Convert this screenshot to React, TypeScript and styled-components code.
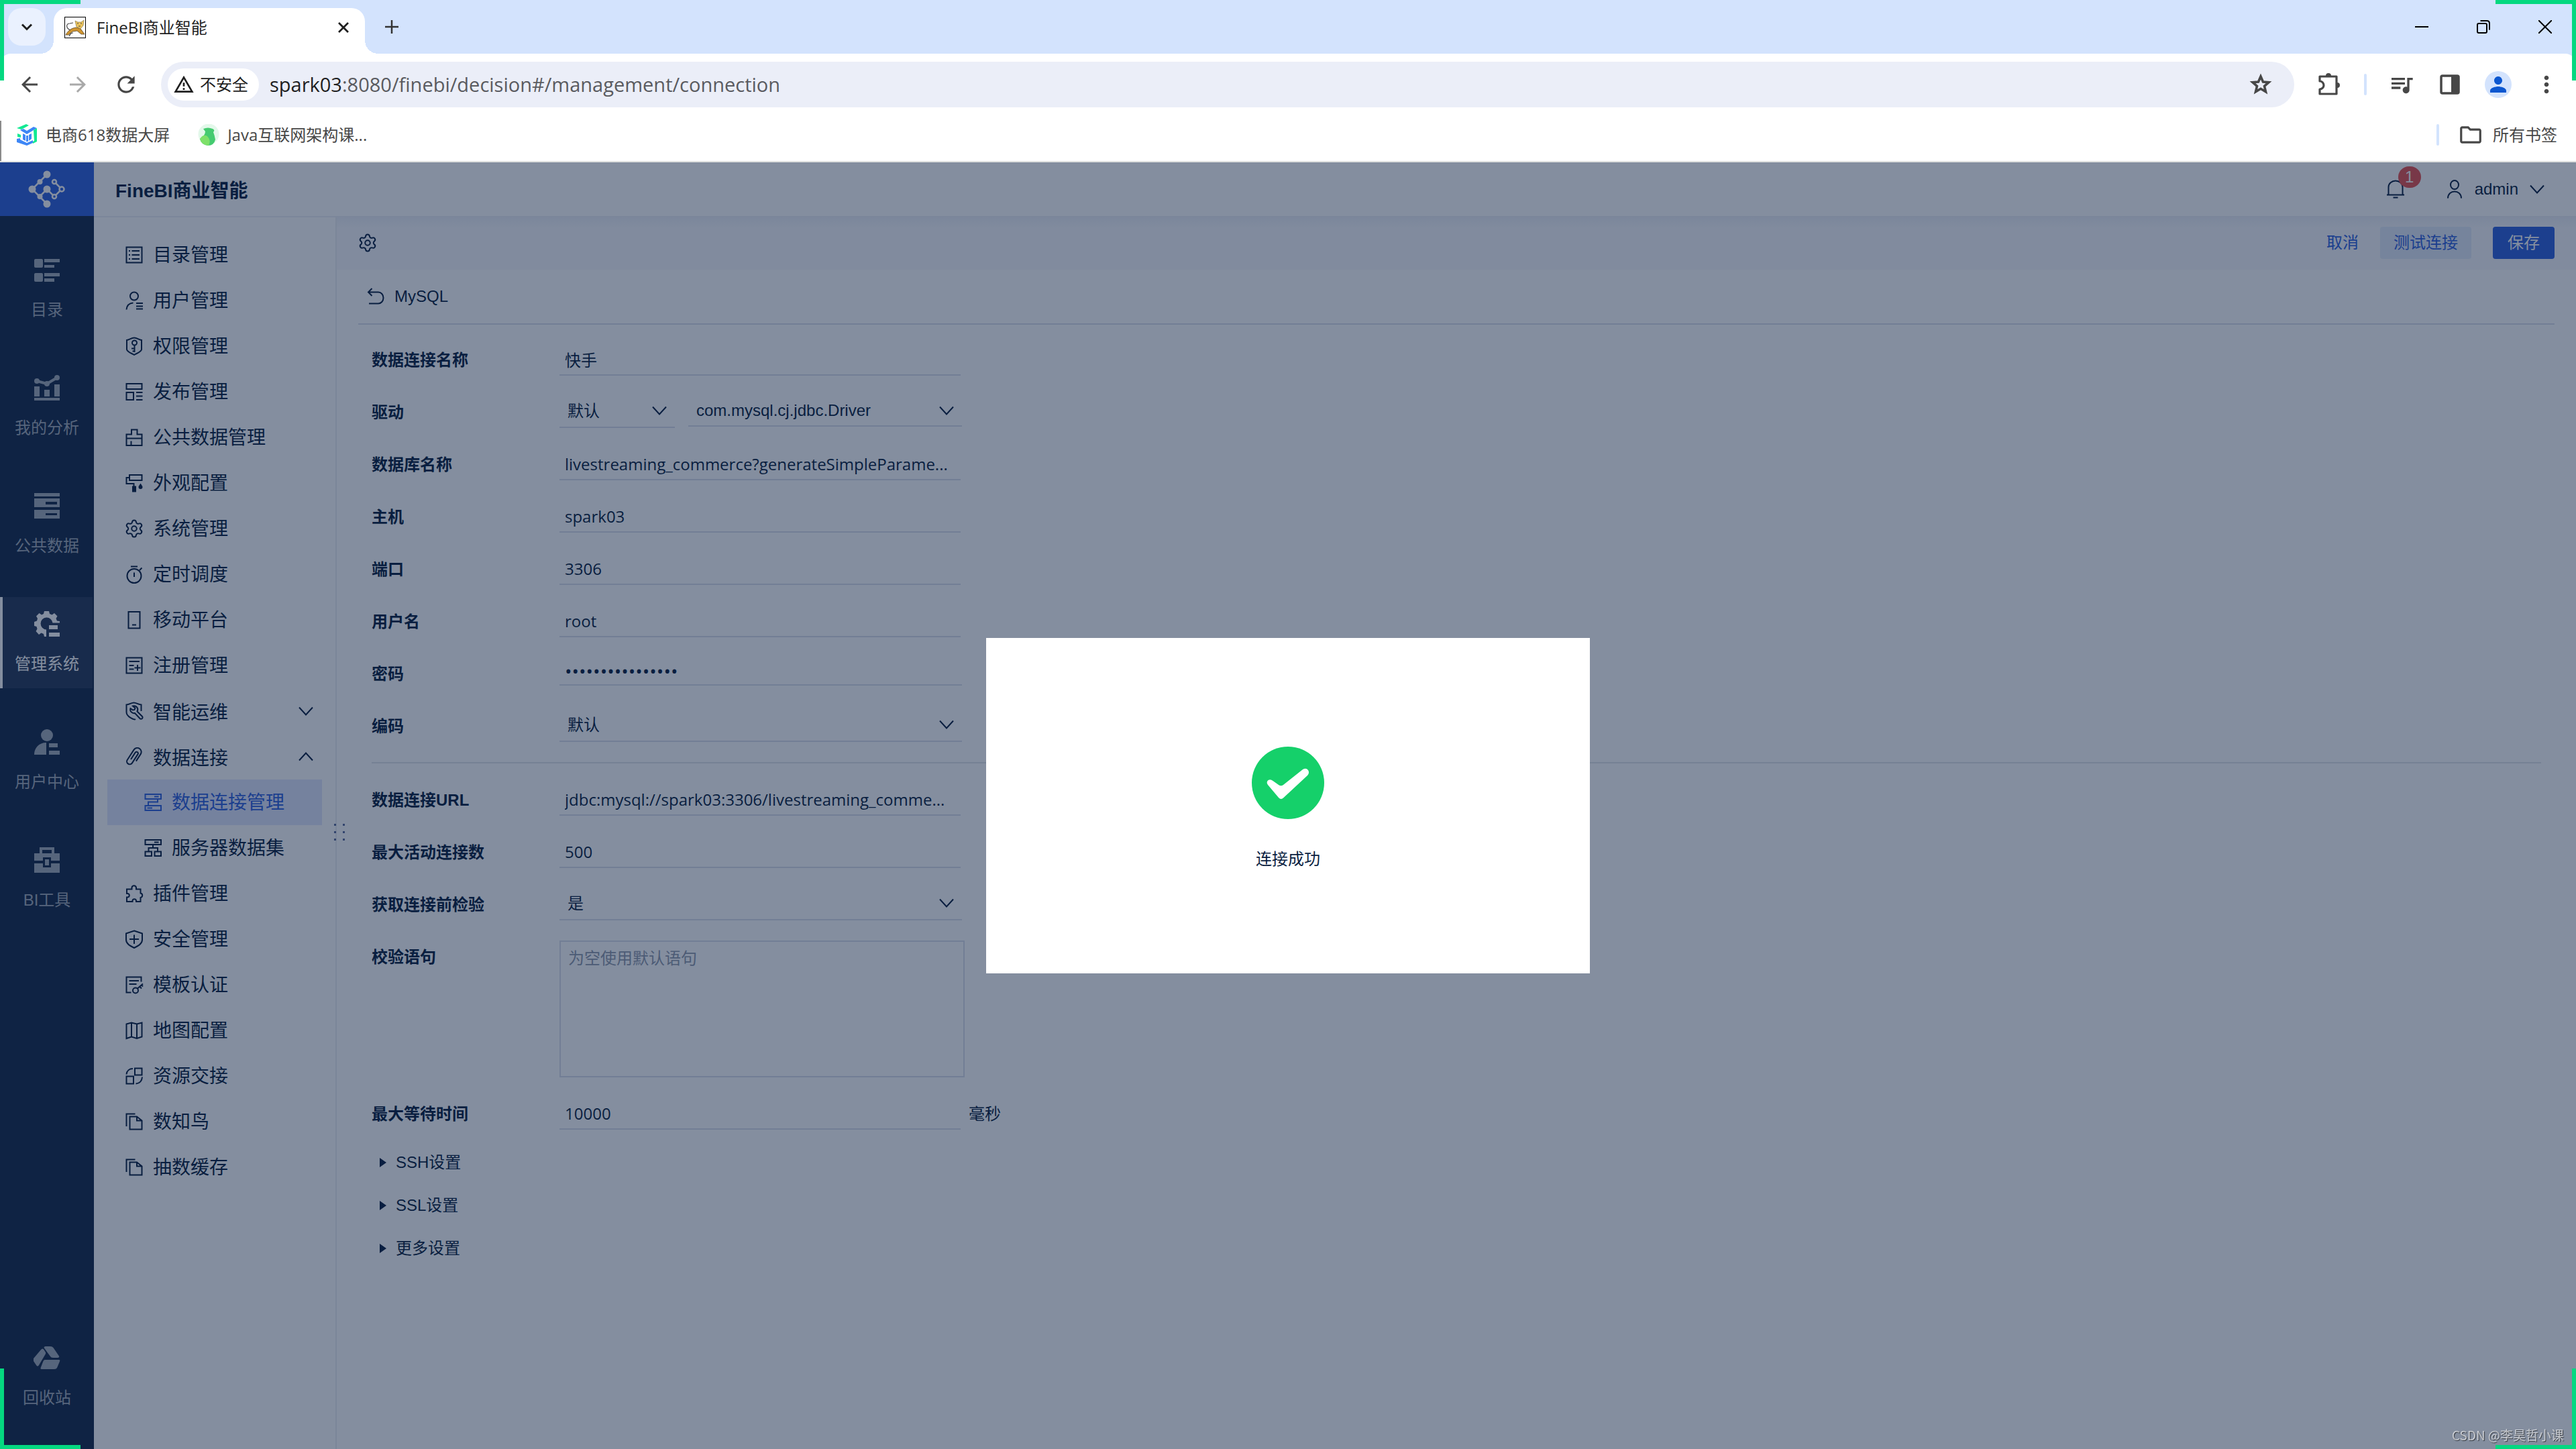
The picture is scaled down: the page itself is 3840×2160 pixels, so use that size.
import React, { ReactNode } from "react";
import styled, { createGlobalStyle, css } from "styled-components";
import { Settings } from "lucide-react";
import { MdQueueMusic, MdOutlineFolder, MdPerson, MdOutlineWarningAmber, MdRefresh, MdArrowBack, MdArrowForward, MdMoreVert } from "react-icons/md";

const chromeFont = `"Open Sans", "Noto Sans CJK SC", sans-serif`;
const appFont = `"Liberation Sans", "Noto Sans CJK SC", sans-serif`;

const ink = "#091e40";
const blue = "#2f60dc";
const rule = "#dbdeea";

const GlobalStyle = createGlobalStyle`
  *, *::before, *::after { box-sizing: border-box; }
  body { margin: 0; font-family: ${appFont}; font-size: 24px; line-height: 32px; color: ${ink}; background: #fff; }
  button, input, select, textarea { font: inherit; color: inherit; margin: 0; border: 0; border-radius: 0; background: none; padding: 0; outline: none; }
  a { color: inherit; text-decoration: none; }
  svg { display: block; flex: none; }
`;

const Page = styled.div`
  min-height: 100vh;
  display: flex;
  flex-direction: column;
`;

/* ---------- browser frame ---------- */

const Browser = styled.header`
  background: #d3e3fd;
  font-family: ${chromeFont};
  color: #1f1f1f;
`;

const TabStrip = styled.div`
  height: 80px;
  padding: 12px 36px 0 12px;
  display: flex;
  align-items: flex-start;
`;

const TabSearch = styled.button`
  width: 56px;
  height: 56px;
  border-radius: 20px;
  background: #eaf1fe;
  display: grid;
  place-items: center;
`;

const Tab = styled.div`
  position: relative;
  margin-left: 12px;
  width: 464px;
  height: 68px;
  padding: 0 22px 10px 16px;
  border-radius: 20px 20px 0 0;
  background: #fff;
  display: flex;
  align-items: center;
  gap: 16px;

  &::before,
  &::after {
    content: "";
    position: absolute;
    bottom: 0;
    width: 20px;
    height: 20px;
  }
  &::before {
    right: 100%;
    background: radial-gradient(circle at 0 0, transparent 20px, #fff 20px);
  }
  &::after {
    left: 100%;
    background: radial-gradient(circle at 100% 0, transparent 20px, #fff 20px);
  }
`;

const TabTitle = styled.span`
  flex: 1;
`;

const PlainButton = styled.button`
  display: grid;
  place-items: center;
`;

const NewTab = styled(PlainButton)`
  margin-left: 20px;
  width: 40px;
  height: 56px;
`;

const WindowButtons = styled.div`
  margin-left: auto;
  height: 56px;
  display: flex;
  align-items: center;
  gap: 72px;
`;

const Toolbar = styled.div`
  height: 100px;
  padding: 12px 24px 20px 24px;
  border-radius: 16px 16px 0 0;
  background: #fff;
  color: #474747;
  display: flex;
  align-items: center;
`;

const NavButtons = styled.div`
  display: flex;
  gap: 32px;
  margin-right: 32px;
`;

const NavButton = styled(PlainButton)<{ $dim?: boolean }>`
  width: 40px;
  height: 40px;
  color: ${(p) => (p.$dim ? "#a9a9a9" : "#474747")};
`;

const Omnibox = styled.div`
  flex: 1;
  height: 68px;
  padding: 0 32px 0 10px;
  border-radius: 34px;
  background: #ebeef8;
  display: flex;
  align-items: center;
  gap: 16px;
`;

const SiteChip = styled.button`
  height: 48px;
  padding: 0 16px 0 8px;
  border-radius: 24px;
  background: #fff;
  color: #1f1f1f;
  display: flex;
  align-items: center;
  gap: 8px;
`;

const Address = styled.span`
  flex: 1;
  font-size: 29px;
  line-height: 40px;
  color: #5a5b60;

  b {
    font-weight: 400;
    color: #1f1f1f;
  }
`;

const ToolIcons = styled.div`
  margin-left: 32px;
  display: flex;
  align-items: center;
  gap: 32px;
`;

const Separator = styled.span`
  width: 4px;
  height: 32px;
  border-radius: 2px;
  background: #d3e3fd;
`;

const Avatar = styled.button`
  width: 40px;
  height: 40px;
  border-radius: 50%;
  background: #d3e3fd;
  color: #0b57d0;
  display: grid;
  place-items: center;
`;

const Bookmarks = styled.nav`
  height: 62px;
  padding: 0 28px 18px 24px;
  background: #fff;
  color: #474747;
  border-bottom: 2px solid #dfe1df;
  box-shadow: inset 2px 0 #8a8a8a;
  display: flex;
  align-items: center;
  gap: 42px;
`;

const Bookmark = styled.a`
  display: flex;
  align-items: center;
  gap: 12px;
`;

const AllBookmarks = styled.button`
  margin-left: auto;
  display: flex;
  align-items: center;
  gap: 14px;

  ${Separator} {
    margin-right: 14px;
  }
`;

/* ---------- application shell ---------- */

const Shell = styled.div`
  position: relative;
  flex: 1;
  display: flex;
`;

const Rail = styled.nav`
  width: 140px;
  background: #152848;
  display: flex;
  flex-direction: column;
  gap: 40px;
  padding-bottom: 40px;
`;

const Logo = styled.a`
  height: 80px;
  background: ${blue};
  color: #fff;
  display: grid;
  place-items: center;
`;

const RailItem = styled.a<{ $active?: boolean; $last?: boolean }>`
  height: 136px;
  margin-right: 2px;
  padding: 20px 0 0 2px;
  color: ${(p) => (p.$active ? "#fff" : "#a3acb8")};
  background: ${(p) => (p.$active ? "#273858" : "transparent")};
  box-shadow: ${(p) => (p.$active ? "inset 4px 0 #fff" : "none")};
  margin-top: ${(p) => (p.$last ? "auto" : "0")};
  display: flex;
  flex-direction: column;
  align-items: center;
  gap: 24px;
`;

const Body = styled.div`
  flex: 1;
  min-width: 0;
  display: flex;
  flex-direction: column;
`;

const AppHeader = styled.div`
  height: 80px;
  padding: 0 46px 0 32px;
  background: #fff;
  display: flex;
  align-items: center;
  justify-content: space-between;
`;

const AppTitle = styled.h1`
  margin: 0;
  padding-top: 6px;
  font-size: 28px;
  line-height: 40px;
`;

const HeaderTools = styled.div`
  display: flex;
  align-items: center;
  gap: 60px;
`;

const Notice = styled.button`
  position: relative;
`;

const Badge = styled.span`
  position: absolute;
  left: 18px;
  bottom: 16px;
  width: 34px;
  height: 32px;
  border-radius: 16px;
  background: #e75250;
  color: #fff;
  text-align: center;
`;

const Account = styled.button`
  display: flex;
  align-items: center;
  gap: 16px;
`;

const Split = styled.div`
  flex: 1;
  display: flex;
  border-top: 2px solid #eceef4;
`;

const Sidebar = styled.nav`
  position: relative;
  width: 362px;
  padding: 22px 20px;
  background: #fff;
  border-right: 2px solid #eceef2;
  font-size: 28px;
  line-height: 40px;
`;

const SideItem = styled.a<{ $sub?: boolean; $active?: boolean }>`
  height: 68px;
  padding: 0 12px 0 ${(p) => (p.$sub ? 54 : 26)}px;
  display: flex;
  align-items: center;
  gap: 14px;
  ${(p) =>
    p.$active &&
    css`
      background: #e1e6fd;
      color: ${blue};
    `}
`;

const SideLabel = styled.span<{ $group?: boolean }>`
  flex: 1;
  padding-top: ${(p) => (p.$group ? 6 : 2)}px;
`;

const DragHandle = styled.span`
  position: absolute;
  right: -14px;
  top: 904px;
  display: grid;
  grid-template-columns: 3px 3px;
  gap: 8px 10px;

  i {
    height: 3px;
    background: #5a6b9a;
  }
`;

const Main = styled.main`
  flex: 1;
  min-width: 0;
  background: #fff;
`;

const ActionBar = styled.div`
  height: 78px;
  padding: 0 32px 2px;
  background: linear-gradient(#edf0f7, #f8f9fc 16px);
  display: flex;
  align-items: center;
  gap: 32px;
`;

const ActionButton = styled.button<{ $kind: "text" | "soft" | "solid" }>`
  height: 48px;
  border-radius: 4px;
  color: ${(p) => (p.$kind === "solid" ? "#fff" : blue)};
  background: ${(p) => ({ text: "none", soft: "#e3eaf8", solid: blue }[p.$kind])};
  padding: 0 ${(p) => ({ text: 0, soft: 20, solid: 22 }[p.$kind])}px;
`;

const Spacer = styled.span`
  flex: 1;
`;

const BackRow = styled.div`
  height: 82px;
  margin: 0 32px;
  padding-left: 12px;
  border-bottom: 2px solid ${rule};
`;

const BackButton = styled.button`
  height: 80px;
  display: flex;
  align-items: center;
  gap: 14px;
`;

const Form = styled.form`
  padding: 28px 52px;
  display: flex;
  flex-direction: column;
  gap: 30px;
`;

const FormRow = styled.div`
  min-height: 48px;
  display: flex;
  align-items: flex-start;
`;

const FieldLabel = styled.label`
  width: 280px;
  font-weight: 700;
  line-height: 50px;
  height: 48px;
`;

const TextInput = styled.input`
  width: 598px;
  height: 48px;
  padding: 0 8px;
  border-bottom: 2px solid ${rule};
  font-family: ${chromeFont};
`;

const PasswordInput = styled(TextInput)`
  width: 600px;
  height: 42px;
  font-size: 28px;
`;

const SelectBox = styled.div<{ $w: number; $h?: number }>`
  position: relative;
  width: ${(p) => p.$w}px;
  height: ${(p) => p.$h ?? 48}px;
  margin-right: 20px;

  select {
    appearance: none;
    width: 100%;
    height: 100%;
    padding: 0 40px 0 12px;
    border-bottom: 2px solid ${rule};
  }
  svg {
    position: absolute;
    right: 11px;
    top: 10px;
    pointer-events: none;
  }
`;

const TextArea = styled.textarea`
  width: 604px;
  height: 204px;
  padding: 9px 11px;
  border: 2px solid ${rule};
  resize: none;

  &::placeholder {
    color: #8f99ab;
    opacity: 1;
  }
`;

const Unit = styled.span`
  margin-left: 12px;
  line-height: 50px;
`;

const Divider = styled.hr`
  width: 100%;
  height: 2px;
  margin: 0;
  border: 0;
  background: #e0e4e8;
`;

const Expander = styled.button`
  align-self: flex-start;
  height: 34px;
  padding-left: 12px;
  display: flex;
  align-items: center;
  gap: 13px;
`;

/* ---------- overlay layers ---------- */

const Mask = styled.div`
  position: absolute;
  inset: 0;
  background: rgba(9, 30, 64, 0.5);
  display: grid;
  place-items: center;
`;

const Dialog = styled.div`
  width: 900px;
  height: 500px;
  padding-top: 162px;
  background: #fff;
  display: flex;
  flex-direction: column;
  align-items: center;
  gap: 44px;
`;

const Corner = styled.span<{ $v: "top" | "bottom"; $h: "left" | "right" }>`
  position: fixed;
  ${(p) => p.$v}: 0;
  ${(p) => p.$h}: 0;
  width: 120px;
  height: 120px;
  border: 0 solid #05d880;
  border-${(p) => p.$v}-width: 6px;
  border-${(p) => p.$h}-width: 6px;
  pointer-events: none;
`;

const Watermark = styled.span`
  position: fixed;
  right: 18px;
  bottom: 9px;
  font: 19px/24px "Noto Sans CJK SC", sans-serif;
  color: rgba(255, 255, 255, 0.65);
  text-shadow: 1px 1px 1px rgba(0, 0, 0, 0.6);
`;

/* ---------- icons ---------- */

const Line = ({ children, size = 28, w = 2 }: { children: ReactNode; size?: number; w?: number }) => (
  <svg width={size} height={size} viewBox="0 0 28 28" fill="none" stroke="currentColor" strokeWidth={w} aria-hidden="true">
    {children}
  </svg>
);

const Chevron = ({ up }: { up?: boolean }) => (
  <svg width="24" height="24" viewBox="0 0 24 24" fill="none" stroke="currentColor" strokeWidth="2" aria-hidden="true">
    <path d={up ? "M2 17.5 12 6.5 22 17.5" : "M2 6.5 12 17.5 22 6.5"} />
  </svg>
);

const Files = () => (
  <Line>
    <path d="M2.5 21V2.5H15.5M7.5 6.5H18L25.5 12.5V25.5H7.5ZM18 6.5V12.5H25.5" />
  </Line>
);

const GearIcon = styled(Settings)`
  margin: -1px;
`;

const Gear = () => <GearIcon size={30} strokeWidth={1.6} />;

const sideIcons: Record<string, ReactNode> = {
  catalog: <Line><path d="M2.5 2.5H25.5V25.5H2.5ZM10.5 8H22M10.5 14H22M10.5 20H22M6 8H8M6 14H8M6 20H8" /></Line>,
  user: <Line><circle cx="14" cy="7.5" r="6" /><path d="M2.5 27.5C3 22 6.5 18 12.5 17.5M17 18H27M17 22.5H27M17 26.5H27" /></Line>,
  perm: <Line><path d="M3 5C7 4.500 9.500 1.500 14 1.500S21 4.500 25 5V19C24 23 18 24.500 14 27C10 24.500 4 23 3 19Z" /><circle cx="14.500" cy="9" r="3.500" /><path d="M14.500 12.500V23M10 17.500H14.500M11.500 21.500H14.500" /></Line>,
  publish: <Line><path d="M2.500 2H25.500V10H2.500ZM2.500 15H13V26H2.500ZM17 15H26.500M17 20.500H26.500M17 26H26.500" /></Line>,
  data: <Line><path d="M2.500 26V9.500H10V2.500H18.500V9.500H25.500V26ZM2.500 15.500H25.500M9.500 19.500V26" /></Line>,
  look: <Line><path d="M7 2H25.500V10H7ZM7 6H2.500V15H13.500V19" /><path d="M11 18.500H17V27.500H11ZM23.500 14.500C25 17 26.500 18.500 26.500 20A3 3 0 0 1 20.500 20C20.500 18.500 22 17 23.500 14.500Z" fill="currentColor" stroke="none" /></Line>,
  system: <Gear />,
  timer: <Line><circle cx="14" cy="16.500" r="10.500" /><path d="M9 2.500H19M14 11.500V18M22 8L25.500 4.500" /></Line>,
  mobile: <Line><path d="M5.500 2H22.500V26.500H5.500ZM11 21.500H17" /></Line>,
  register: <Line><path d="M2.500 2.500H25.500V25.500H2.500ZM6.500 8H22M6.500 14H13.500M6.500 19.500H13.500M14.500 17.500H23.500M19 13V22" /></Line>,
  ops: (
    <Line>
      <path d="M16 26C14 27.500 2.500 22.500 2.500 15.500V4.500C7 4.500 9.500 1.500 13.500 1.500S20 4.500 24.500 4.500V14" />
      <path d="M12 6.500 15.500 9.500 14.500 12 12 12.500 8.500 10A5.500 5.500 0 0 0 15 17L22.500 25A2.200 2.200 0 0 0 26 22L18.500 14.500A5.500 5.500 0 0 0 12 6.500Z" />
    </Line>
  ),
  clip: <Line><path transform="rotate(33 14 14)" d="M20 18V5.500A6 6 0 0 0 8 5.500V23.500A4.300 4.300 0 0 0 16.600 23.500V8A2.300 2.300 0 0 0 12 8V20" /></Line>,
  conn: <Line><path d="M2.500 2H26V9H2.500ZM2.500 19H26V26H2.500ZM21 9V13.500H7V19M16 5.500H22.500M5.500 22.500H13" /></Line>,
  dataset: <Line><path d="M2.500 2H26V9H2.500ZM2.500 19.500H12V26H2.500ZM16.500 19.500H26V26H16.500ZM16 5.500H22.500M14 9V14M7.500 19.500V14H21V19.500" /></Line>,
  plugin: <Line><path d="M3 7.500H10.500V5A3.300 3.300 0 0 1 17 5V7.500H23.500V13.500A3.300 3.300 0 0 1 23.500 20V26H17V24.500A2.800 2.800 0 0 0 11.500 24.500V26H3V19.500H4.500A2.800 2.800 0 0 0 4.500 14H3Z" /></Line>,
  security: <Line><path d="M14 1.500 26 5.500V15C26 21 20 24 14 27C8 24 2 21 2 15V5.500ZM14 7.500V21M7 14H21" /></Line>,
  cert: <Line><path d="M24.500 9.500V2.500H2.500V25.500H9.500M6.500 8H21M6.500 13H17.500" /><circle cx="16" cy="22.500" r="4" /><path d="M19 19.500 27 12.500M22.500 17L25 19.500M25 14.500 27 16.500" /></Line>,
  map: <Line><path d="M2.500 4.500 10 2.500 18 4.500 25.500 2.500V23.500L18 26 10 23.500 2.500 26ZM10 2.500V23.500M18 4.500V26" /></Line>,
  handover: <Line><path d="M2.500 14.500H13V25.500H2.500ZM15 2.500H25.500V12.500H15ZM2.500 11.500C3 6 7 3 12 3M26 15.500C25.500 21.500 22 25 16.500 25.500" /></Line>,
  files: <Files />,
};

const Solid = ({ children }: { children: ReactNode }) => (
  <svg width="40" height="40" viewBox="0 0 40 40" fill="currentColor" aria-hidden="true">
    {children}
  </svg>
);

const railIcons = {
  catalog: (
    <Solid>
      <rect x="1" y="4" width="13" height="13" rx="2" />
      <rect x="1" y="25" width="13" height="13" rx="2" />
      <path d="M16 4H39V9H16ZM16 13H31V17H16ZM16 25H39V30H16ZM16 33H31V38H16Z" />
    </Solid>
  ),
  analysis: (
    <Solid>
      <path d="M1 18H9V33H1ZM16 23H24V33H16ZM31 15H39V33H31ZM1 35H39V39H1Z" />
      <circle cx="5" cy="10" r="4" />
      <circle cx="20" cy="14" r="4" />
      <circle cx="35" cy="5" r="4" />
      <path d="M5 10 20 14 35 5" fill="none" stroke="currentColor" strokeWidth="4" />
    </Solid>
  ),
  data: (
    <Solid>
      <path fillRule="evenodd" d="M1 1H39V6H1ZM1 9H39V22H1ZM18 14V18H35V14ZM1 26H39V39H1ZM18 31V34H35V31Z" />
    </Solid>
  ),
  manage: (
    <Solid>
      <path d="M16 1H23L24 5 27.500 6.500 31 4 35.500 8.500 33.500 12 35 15.500 39 16V18.500H28.500A9 9 0 1 0 19 28.500V39H16L15 35 11.500 33.500 8 36 3.500 31 5.500 27.500 4.500 24 1 23V17L5 15.500 6 12 4 8.500 8.500 4 12 6.500 15 5Z" />
      <path d="M23 22H36V28H23ZM23 33H39V39H23Z" />
    </Solid>
  ),
  user: (
    <Solid>
      <circle cx="20" cy="10" r="9" />
      <path d="M19 21V39H1C1 29 8 21 19 21ZM23 22H36V28H23ZM23 33H39V39H23Z" />
    </Solid>
  ),
  tools: (
    <Solid>
      <path fillRule="evenodd" d="M9 10V1H31V10H39V21H26V16H14V21H1V10ZM13 10H27V5H13ZM1 25H14V31H26V25H39V39H1ZM17 19H23V28H17Z" />
    </Solid>
  ),
  recycle: (
    <Solid>
      <path d="M18 3H25Q28 3 29.500 5L38 17.500Q39 20 36 20H29Q26 20 25 18L15.500 5Q15.500 3 18 3ZM11 8Q13.500 5 15.500 8L18 12Q18.500 13.500 17.500 15L8 31Q6 34 4 31L0 25Q-1 23 0 21ZM17 23H38Q40 23 39 25.500L35 35Q34 37 31 37H12Q9.500 37 11 34L14.500 25Q15.500 23 17 23Z" />
    </Solid>
  ),
};

const LogoMark = () => (
  <svg width="56" height="56" viewBox="0 0 56 56" fill="currentColor" stroke="currentColor" strokeWidth="2.500" aria-hidden="true">
    <path d="M28 6 17 17 6 28 17 39 28 50M17 39 28 28 39 39 50 28 39 17" fill="none" />
    <g stroke="none">
      <circle cx="28" cy="6" r="5.500" />
      <circle cx="17.500" cy="17" r="4" />
      <circle cx="6" cy="28" r="5.500" />
      <circle cx="28" cy="28" r="5.500" />
      <circle cx="17.500" cy="39" r="4" />
      <circle cx="28" cy="50" r="5.500" />
    </g>
    <g fill={blue}>
      <circle cx="39" cy="17" r="3" />
      <circle cx="50" cy="28" r="3.500" />
      <circle cx="39" cy="39" r="3" />
    </g>
  </svg>
);

const Favicon = () => (
  <svg width="32" height="32" viewBox="0 0 32 32" aria-hidden="true">
    <rect x=".5" y=".5" width="31" height="31" fill="#fff" stroke="#000" />
    <path d="M2 27C5 21 10 17 17 16L22 17 25 19 30 26H25L19 21 12 22 6 27Z" fill="#cf9430" stroke="#4a3a1a" strokeWidth=".7" />
    <path d="M16 6 20 8H25L29 5 28 13 24 18 18 15Z" fill="#ecc45c" stroke="#8a7a4a" strokeWidth=".7" />
    <path d="M19 10H21M24 10H26M21 14H24M9 20C2 17 2 10 8 10L13 9M7 29C9 25 10 24 13 24" stroke="#444" strokeWidth="1.200" fill="none" />
  </svg>
);

const CubeIcon = () => (
  <svg width="32" height="32" viewBox="0 0 32 32" aria-hidden="true">
    <path d="M1 6 15 0 19 2 8 8Z" fill="#12ea92" />
    <path d="M6 9 11 7 16 10 26 4 31 6 16 15ZM1 22 6 21V23L16 28 25 24V28L16 32 1 27Z" fill="#3d86f6" />
    <path d="M26 9 31 6V26L25 29V26L27 25ZM2 14 7 16V20L2 19Z" fill="#12ea92" />
    <path d="M10 14 14 16V25L10 23ZM15 17H18V26H15ZM19 16 23 14V22L19 25Z" fill="#3d86f6" />
  </svg>
);

const FlaskIcon = () => (
  <svg width="32" height="32" viewBox="0 0 32 32" aria-hidden="true">
    <circle cx="16" cy="15" r="15.500" fill="#e3f8ea" />
    <path d="M8 7Q15 4 22 7Q26 9 23 12Q25 17 26 23Q24 32 15 32Q5 31 3 22Q11 17 11 11Z" fill="#45cb70" />
    <path d="M3 22Q8 14 14 18Q20 24 16 32Q5 31 3 22Z" fill="#7ee069" />
  </svg>
);

const StarIcon = () => (
  <svg width="36" height="36" viewBox="0 0 36 36" fill="none" stroke="currentColor" strokeWidth="3.600" aria-hidden="true">
    <path d="M18 6 21.500 14 30 14.700 23.500 20.300 25.500 28.800 18 24.300 10.500 28.800 12.500 20.300 6 14.700 14.500 14Z" />
  </svg>
);

const PuzzleIcon = () => (
  <svg width="40" height="40" viewBox="0 0 40 40" fill="none" stroke="currentColor" strokeWidth="3.200" strokeLinejoin="round" aria-hidden="true">
    <path d="M6 8H31V34H6V27A6 6 0 0 0 6 15Z" />
    <path d="M15 7A4 4 0 0 1 23 7ZM32 17A4 4 0 0 1 32 25Z" fill="currentColor" stroke="none" />
  </svg>
);

const Success = () => (
  <svg width="108" height="108" viewBox="0 0 108 108" role="img" aria-label="成功">
    <circle cx="54" cy="54" r="54" fill="#15d06a" />
    <path d="M24.500 50Q28 48 31.500 51L40 57Q43.500 59.500 47 57L76 34Q81 31 84 35Q86.500 39 83 43L47.500 76Q43.500 80 40 76L24 57Q21 53 24.500 50Z" fill="#fff" />
  </svg>
);

/* ---------- data ---------- */

const rail: { label: string; icon: keyof typeof railIcons; active?: boolean; last?: boolean }[] = [
  { label: "目录", icon: "catalog" },
  { label: "我的分析", icon: "analysis" },
  { label: "公共数据", icon: "data" },
  { label: "管理系统", icon: "manage", active: true },
  { label: "用户中心", icon: "user" },
  { label: "BI工具", icon: "tools" },
  { label: "回收站", icon: "recycle", last: true },
];

const side: { label: string; icon: string; sub?: boolean; active?: boolean; fold?: "open" | "closed" }[] = [
  { label: "目录管理", icon: "catalog" },
  { label: "用户管理", icon: "user" },
  { label: "权限管理", icon: "perm" },
  { label: "发布管理", icon: "publish" },
  { label: "公共数据管理", icon: "data" },
  { label: "外观配置", icon: "look" },
  { label: "系统管理", icon: "system" },
  { label: "定时调度", icon: "timer" },
  { label: "移动平台", icon: "mobile" },
  { label: "注册管理", icon: "register" },
  { label: "智能运维", icon: "ops", fold: "closed" },
  { label: "数据连接", icon: "clip", fold: "open" },
  { label: "数据连接管理", icon: "conn", sub: true, active: true },
  { label: "服务器数据集", icon: "dataset", sub: true },
  { label: "插件管理", icon: "plugin" },
  { label: "安全管理", icon: "security" },
  { label: "模板认证", icon: "cert" },
  { label: "地图配置", icon: "map" },
  { label: "资源交接", icon: "handover" },
  { label: "数知鸟", icon: "files" },
  { label: "抽数缓存", icon: "files" },
];

const Field = ({ id, label, value, unit }: { id: string; label: string; value: string; unit?: string }) => (
  <FormRow>
    <FieldLabel htmlFor={id}>{label}</FieldLabel>
    <TextInput id={id} defaultValue={value} />
    {unit && <Unit>{unit}</Unit>}
  </FormRow>
);

const Select = ({ id, value, w, h, name }: { id: string; value: string; w: number; h?: number; name?: string }) => (
  <SelectBox $w={w} $h={h}>
    <select id={id} aria-label={name}>
      <option>{value}</option>
    </select>
    <Chevron />
  </SelectBox>
);

const BrowserFrame = () => (
  <Browser>
    <TabStrip>
      <TabSearch aria-label="搜索标签页">
        <svg width="20" height="20" viewBox="0 0 20 20" fill="none" stroke="currentColor" strokeWidth="3">
          <path d="M3 6.500 10 13.500 17 6.500" />
        </svg>
      </TabSearch>
      <Tab>
        <Favicon />
        <TabTitle>FineBI商业智能</TabTitle>
        <PlainButton aria-label="关闭标签页">
          <svg width="20" height="20" viewBox="0 0 20 20" fill="none" stroke="currentColor" strokeWidth="2.800">
            <path d="M3 3 17 17M17 3 3 17" />
          </svg>
        </PlainButton>
      </Tab>
      <NewTab aria-label="新标签页">
        <svg width="20" height="20" viewBox="0 0 20 20" fill="none" stroke="#333" strokeWidth="2.500">
          <path d="M10 0V20M0 10H20" />
        </svg>
      </NewTab>
      <WindowButtons>
        <PlainButton aria-label="最小化">
          <svg width="20" height="20" viewBox="0 0 20 20" stroke="#000" strokeWidth="2">
            <path d="M0 10H20" />
          </svg>
        </PlainButton>
        <PlainButton aria-label="还原">
          <svg width="20" height="20" viewBox="0 0 20 20" fill="none" stroke="#000" strokeWidth="2">
            <rect x="1" y="5" width="14" height="14" rx="2" />
            <path d="M5.500 1H15Q19 1 19 5V14.500" />
          </svg>
        </PlainButton>
        <PlainButton aria-label="关闭">
          <svg width="20" height="20" viewBox="0 0 20 20" stroke="#000" strokeWidth="2">
            <path d="M0 0 20 20M20 0 0 20" />
          </svg>
        </PlainButton>
      </WindowButtons>
    </TabStrip>
    <Toolbar>
      <NavButtons>
        <NavButton aria-label="后退"><MdArrowBack size={36} /></NavButton>
        <NavButton aria-label="前进" $dim><MdArrowForward size={36} /></NavButton>
        <NavButton aria-label="重新加载"><MdRefresh size={38} /></NavButton>
      </NavButtons>
      <Omnibox>
        <SiteChip>
          <MdOutlineWarningAmber size={32} />
          不安全
        </SiteChip>
        <Address>
          <b>spark03</b>:8080/finebi/decision#/management/connection
        </Address>
        <PlainButton aria-label="收藏"><StarIcon /></PlainButton>
      </Omnibox>
      <ToolIcons>
        <PlainButton aria-label="扩展程序"><PuzzleIcon /></PlainButton>
        <Separator />
        <PlainButton aria-label="媒体"><MdQueueMusic size={40} /></PlainButton>
        <PlainButton aria-label="侧边栏">
          <svg width="40" height="32" viewBox="0 0 40 32" fill="none" stroke="currentColor" strokeWidth="3.500">
            <rect x="7" y="3" width="26" height="26" rx="2" />
            <path d="M22 3H33V29H22Z" fill="currentColor" stroke="none" />
          </svg>
        </PlainButton>
        <Avatar aria-label="个人资料"><MdPerson size={36} /></Avatar>
        <PlainButton aria-label="菜单"><MdMoreVert size={40} /></PlainButton>
      </ToolIcons>
    </Toolbar>
    <Bookmarks>
      <Bookmark href="#"><CubeIcon />电商618数据大屏</Bookmark>
      <Bookmark href="#"><FlaskIcon />Java互联网架构课...</Bookmark>
      <AllBookmarks>
        <Separator />
        <MdOutlineFolder size={38} />
        所有书签
      </AllBookmarks>
    </Bookmarks>
  </Browser>
);

const ConnectionForm = () => (
  <Form>
    <Field id="name" label="数据连接名称" value="快手" />
    <FormRow>
      <FieldLabel htmlFor="driverKind">驱动</FieldLabel>
      <Select id="driverKind" value="默认" w={172} />
      <Select id="driver" name="驱动类" value="com.mysql.cj.jdbc.Driver" w={408} h={46} />
    </FormRow>
    <Field id="database" label="数据库名称" value="livestreaming_commerce?generateSimpleParame..." />
    <Field id="host" label="主机" value="spark03" />
    <Field id="port" label="端口" value="3306" />
    <Field id="user" label="用户名" value="root" />
    <FormRow>
      <FieldLabel htmlFor="password">密码</FieldLabel>
      <PasswordInput id="password" type="password" defaultValue="0123456789abcdef" />
    </FormRow>
    <FormRow>
      <FieldLabel htmlFor="encoding">编码</FieldLabel>
      <Select id="encoding" value="默认" w={600} />
    </FormRow>
    <Divider />
    <Field id="url" label="数据连接URL" value="jdbc:mysql://spark03:3306/livestreaming_comme..." />
    <Field id="maxActive" label="最大活动连接数" value="500" />
    <FormRow>
      <FieldLabel htmlFor="testOnBorrow">获取连接前检验</FieldLabel>
      <Select id="testOnBorrow" value="是" w={600} />
    </FormRow>
    <FormRow>
      <FieldLabel htmlFor="query">校验语句</FieldLabel>
      <TextArea id="query" placeholder="为空使用默认语句" />
    </FormRow>
    <Field id="maxWait" label="最大等待时间" value="10000" unit="毫秒" />
    {["SSH设置", "SSL设置", "更多设置"].map((text) => (
      <Expander type="button" key={text}>
        <svg width="11" height="14" viewBox="0 0 11 14" fill="currentColor">
          <path d="M0 0 10 7 0 14Z" />
        </svg>
        {text}
      </Expander>
    ))}
  </Form>
);

export default function App() {
  return (
    <Page>
      <GlobalStyle />
      <BrowserFrame />
      <Shell>
        <Rail>
          <Logo href="#" aria-label="FineBI"><LogoMark /></Logo>
          {rail.map((item) => (
            <RailItem href="#" key={item.label} $active={item.active} $last={item.last}>
              {railIcons[item.icon]}
              {item.label}
            </RailItem>
          ))}
        </Rail>
        <Body>
          <AppHeader>
            <AppTitle>FineBI商业智能</AppTitle>
            <HeaderTools>
              <Notice aria-label="消息">
                <Line>
                  <path d="M3.500 23V11A10.500 9.500 0 0 1 24.500 11V23M1 22.500H27M10.500 26.500H17.500" />
                </Line>
                <Badge>1</Badge>
              </Notice>
              <Account>
                <Line>
                  <ellipse cx="14" cy="7.500" rx="6" ry="6.500" />
                  <path d="M4 27.500C4 14 24 14 24 27.500" />
                </Line>
                admin
                <Chevron />
              </Account>
            </HeaderTools>
          </AppHeader>
          <Split>
            <Sidebar>
              {side.map((item) => (
                <SideItem href="#" key={item.label} $sub={item.sub} $active={item.active}>
                  {sideIcons[item.icon]}
                  <SideLabel $group={!!item.fold}>{item.label}</SideLabel>
                  {item.fold && <Chevron up={item.fold === "open"} />}
                </SideItem>
              ))}
              <DragHandle>
                <i /><i /><i /><i /><i /><i />
              </DragHandle>
            </Sidebar>
            <Main>
              <ActionBar>
                <Gear />
                <Spacer />
                <ActionButton $kind="text">取消</ActionButton>
                <ActionButton $kind="soft">测试连接</ActionButton>
                <ActionButton $kind="solid">保存</ActionButton>
              </ActionBar>
              <BackRow>
                <BackButton>
                  <Line>
                    <path d="M8.500 2 3 7.500 8.500 13M3 7.500H18A7.500 8.500 0 0 1 18 24.500H4" />
                  </Line>
                  MySQL
                </BackButton>
              </BackRow>
              <ConnectionForm />
            </Main>
          </Split>
        </Body>
        <Mask>
          <Dialog role="dialog" aria-label="连接成功">
            <Success />
            连接成功
          </Dialog>
        </Mask>
      </Shell>
      <Corner $v="top" $h="left" />
      <Corner $v="top" $h="right" />
      <Corner $v="bottom" $h="left" />
      <Corner $v="bottom" $h="right" />
      <Watermark>CSDN @李昊哲小课</Watermark>
    </Page>
  );
}
